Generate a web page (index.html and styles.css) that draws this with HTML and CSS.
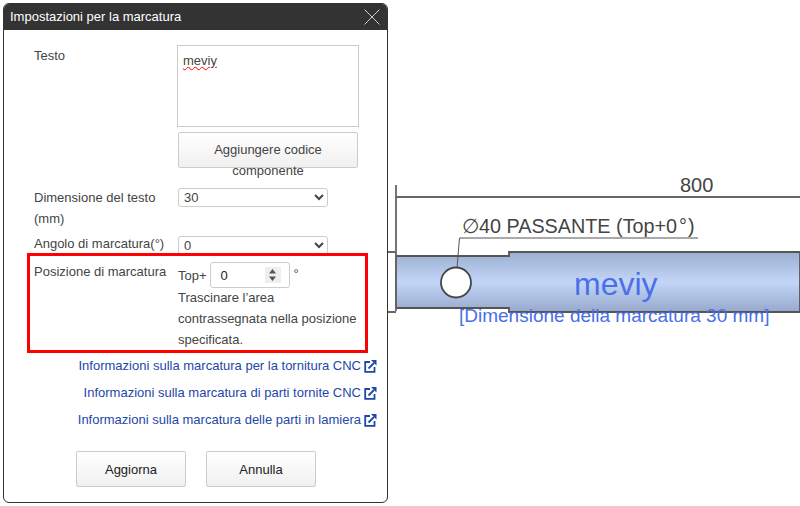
FILE: index.html
```html
<!DOCTYPE html>
<html lang="it">
<head>
<meta charset="utf-8">
<title>Impostazioni per la marcatura</title>
<link rel="stylesheet" href="styles.css">
</head>
<body>
<svg class="drawing" width="800" height="506" viewBox="0 0 800 506">
  <defs>
    <linearGradient id="shaft" x1="0" y1="0" x2="0" y2="1">
      <stop offset="0" stop-color="#9aaed0"/>
      <stop offset="0.5" stop-color="#c3d6f8"/>
      <stop offset="1" stop-color="#96a9cc"/>
    </linearGradient>
  </defs>
  <path class="shaft" d="M396 256H509V252H800V312H509V308H396Z"/>
  <path class="line" d="M396 185V311M396 197H800M386 252H396M386 312H396"/>
  <path class="thin" d="M698 238H459.500L457 268"/>
  <circle class="hole" cx="456" cy="282.500" r="15"/>
  <text class="dim" x="680" y="192">800</text>
  <text class="dim dim-note" x="462" y="233">∅40 PASSANTE (Top+0<tspan dx="2">°</tspan><tspan dx="1">)</tspan></text>
  <text class="mark" x="574" y="295">meviy</text>
  <text class="note" x="459" y="322">[Dimensione della marcatura 30 mm]</text>
</svg>
<section class="dialog">
  <header class="titlebar">
    <h1 class="title">Impostazioni per la marcatura</h1>
    <svg class="close" width="16" height="16" viewBox="0 0 16 16"><path d="M.5.500L15.500 15.500M15.500.500L.5 15.500"/></svg>
  </header>
  <div class="body">
    <div class="row row-text">
      <div class="label">Testo</div>
      <div class="field">
        <div class="textarea"><span class="spell">meviy</span></div>
        <button class="btn btn-code" type="button">Aggiungere codice componente</button>
      </div>
    </div>
    <div class="row row-size">
      <div class="label">Dimensione del testo (mm)</div>
      <div class="field"><select class="select"><option>30</option></select></div>
    </div>
    <div class="row row-angle">
      <div class="label">Angolo di marcatura(°)</div>
      <div class="field"><select class="select"><option>0</option></select></div>
    </div>
    <div class="row row-pos">
      <div class="label">Posizione di marcatura</div>
      <div class="field">
        <div class="spin-line">
          <span>Top+</span>
          <div class="spin">
            <span class="spin-value">0</span>
            <span class="spin-arrows">
              <svg width="7" height="12" viewBox="0 0 7 12"><path d="M3.500 0L7 4.500H0ZM3.500 12L0 7.500H7Z"/></svg>
            </span>
          </div>
          <span class="deg">°</span>
        </div>
        <p class="hint">Trascinare l’area contrassegnata nella posizione specificata.</p>
      </div>
    </div>
    <div class="highlight"></div>
    <nav class="links">
      <a class="link">Informazioni sulla marcatura per la tornitura CNC<svg class="ext" width="13" height="14" viewBox="0 0 13 14"><path class="ext-box" d="M6 3H1.200V12.800H10.500V8"/><path class="ext-arrow" d="M4.500 9.500L10 4"/><path class="ext-head" d="M7 1H12.500V6.500Z"/></svg></a>
      <a class="link">Informazioni sulla marcatura di parti tornite CNC<svg class="ext" width="13" height="14" viewBox="0 0 13 14"><path class="ext-box" d="M6 3H1.200V12.800H10.500V8"/><path class="ext-arrow" d="M4.500 9.500L10 4"/><path class="ext-head" d="M7 1H12.500V6.500Z"/></svg></a>
      <a class="link">Informazioni sulla marcatura delle parti in lamiera<svg class="ext" width="13" height="14" viewBox="0 0 13 14"><path class="ext-box" d="M6 3H1.200V12.800H10.500V8"/><path class="ext-arrow" d="M4.500 9.500L10 4"/><path class="ext-head" d="M7 1H12.500V6.500Z"/></svg></a>
    </nav>
    <div class="actions">
      <button class="btn btn-action" type="button">Aggiorna</button>
      <button class="btn btn-action" type="button">Annulla</button>
    </div>
  </div>
</section>
</body>
</html>
```
FILE: styles.css
```css
* { box-sizing: border-box; }
html, body { margin: 0; height: 100%; }
body {
  position: relative;
  width: 800px;
  height: 506px;
  overflow: hidden;
  padding: 3px 0 0 3px;
  background: #fff;
  font-family: "Liberation Sans", Arial, sans-serif;
  font-size: 13px;
  color: #444;
}
.drawing { position: absolute; left: 0; top: 0; }
.shaft { fill: url(#shaft); stroke: #555; stroke-width: 1.800; }
.line { fill: none; stroke: #666; stroke-width: 1.800; }
.thin { fill: none; stroke: #555; stroke-width: 1; }
.hole { fill: #fff; stroke: #444; stroke-width: 1.800; }
.dim { font-size: 20px; fill: #444; }
.dim-note { font-size: 19.800px; }
.mark { font-size: 32px; fill: #4a6fe8; }
.note { font-size: 19px; fill: #4a6fe8; }

.dialog {
  position: relative;
  width: 385px;
  height: 500px;
  background: #fff;
  border: 1px solid #333;
  border-radius: 6px;
  overflow: hidden;
}
.titlebar {
  display: flex;
  align-items: center;
  justify-content: space-between;
  height: 26px;
  padding: 0 7px 0 6px;
  background: #333;
  color: #fff;
}
.title { margin: 0 0 2px; font-size: 13px; font-weight: normal; }
.close { display: block; fill: none; stroke: #ccc; stroke-width: 1; }

.body { position: relative; padding: 15px 0 0 30px; }
.row { display: flex; line-height: 21px; }
.label { width: 143px; flex: none; }
.field { flex: none; width: 182px; }
.row-text { height: 142px; }
.row-size { height: 46px; }
.row-angle { height: 28px; }
.row-pos { height: 94px; }
.textarea {
  width: 182px;
  height: 82px;
  border: 1px solid #ccc;
  padding: 5px;
  line-height: 20px;
}
.spell { text-decoration: underline wavy #f00 1px; text-underline-offset: 1px; }
.btn {
  display: block;
  font: inherit;
  color: #444;
  background: linear-gradient(#fff, #f0f0f0);
  border: 1px solid #ccc;
  border-radius: 2px;
  padding: 0;
}
.btn-code {
  width: 180px;
  height: 36px;
  margin: 5px 0 0 1px;
  line-height: 21px;
  padding: 6px 20px 0;
  overflow: visible;
  text-align: center;
}
.select {
  display: block;
  width: 150px;
  height: 19px;
  margin: 1px 0 0 1px;
  padding: 0 0 0 1px;
  font: inherit;
  color: #444;
  background: #fff;
  border: 1px solid #ccc;
  border-radius: 3px;
}
.row-angle .select { margin-top: 3px; }
.spin-line { display: flex; align-items: center; gap: 3px; height: 26px; margin: 1px 0 0 1px; }
.spin {
  display: flex;
  align-items: center;
  justify-content: space-between;
  width: 80px;
  height: 26px;
  border: 1px solid #ccc;
  border-radius: 3px;
  padding: 0 8px 0 10px;
  color: #222;
}
.spin-arrows {
  display: flex;
  align-items: center;
  justify-content: center;
  width: 16px;
  height: 16px;
  background: #eee;
}
.spin-arrows svg { display: block; fill: #555; }
.deg { margin-left: 1px; position: relative; top: -2px; }
.hint { margin: -1px 0 0 1px; line-height: 21px; }
.highlight {
  position: absolute;
  left: 23px;
  top: 223px;
  width: 341px;
  height: 100px;
  border: 3px solid #f00;
}
.links {
  display: flex;
  flex-direction: column;
  align-items: flex-end;
  gap: 6px;
  width: 343px;
}
.link {
  display: flex;
  align-items: center;
  gap: 3px;
  height: 21px;
  color: #1d47a8;
}
.ext { display: block; }
.ext-box, .ext-arrow { fill: none; stroke: #1d47a8; stroke-width: 1.800; }
.ext-head { fill: #1d47a8; }
.actions { display: flex; gap: 20px; margin: 21px 0 0 42px; }
.btn-action { width: 110px; height: 36px; color: #222; }
```
